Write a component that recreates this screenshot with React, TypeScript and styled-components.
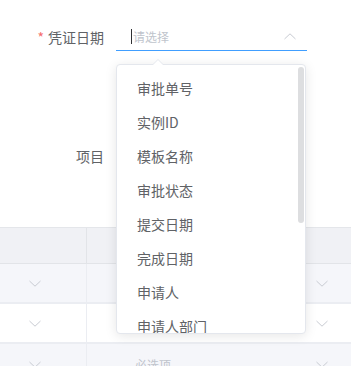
import React from "react";
import styled, { createGlobalStyle } from "styled-components";

const Global = createGlobalStyle`
  html, body { margin: 0; padding: 0; background: #fff; }
  body { font-family: "Noto Sans CJK SC", "Noto Sans", sans-serif; width: 351px; height: 366px; overflow: hidden; }
  * { box-sizing: border-box; }
`;

const Page = styled.div`
  position: relative;
  width: 351px;
  height: 366px;
  overflow: hidden;
  padding-top: 23px;
`;

const FormItem = styled.div<{ $mt?: number }>`
  display: flex;
  align-items: center;
  height: 28px;
  margin-top: ${(p) => p.$mt ?? 0}px;
`;

const Label = styled.div`
  width: 116px;
  padding-right: 12px;
  text-align: right;
  font-size: 14px;
  color: #606266;
  line-height: 28px;
`;

const Star = styled.span`
  color: #f56c6c;
  margin-right: 4px;
`;

const Control = styled.div<{ $active?: boolean }>`
  width: 191px;
  height: 28px;
  display: flex;
  align-items: center;
  padding: 0 11px 0 15px;
  border-bottom: 1px solid ${(p) => (p.$active ? "#409eff" : "transparent")};
`;

const Caret = styled.span`
  width: 1px;
  height: 15px;
  background: #303133;
  margin-right: 1px;
`;

const Placeholder = styled.span`
  flex: 1;
  font-size: 12px;
  color: #c0c4cc;
`;

const Chevron = ({ up, color = "#c8cbd2" }: { up?: boolean; color?: string }) => (
  <svg width="12" height="7" viewBox="0 0 12 7" style={{ display: "block" }}>
    <polyline
      points={up ? "0.5,6 6,0.8 11.5,6" : "0.5,1 6,6.2 11.5,1"}
      fill="none"
      stroke={color}
      strokeWidth="1"
    />
  </svg>
);

const Table = styled.div`
  margin-top: 57px;
  border-top: 1px solid #e4e6ea;
`;

const Row = styled.div<{ $bg: string; $h: number; $bw: number; $head?: boolean }>`
  display: grid;
  grid-template-columns: 87px 1fr;
  height: ${(p) => p.$h}px;
  background: ${(p) => p.$bg};
  border-bottom: ${(p) => p.$bw}px solid ${(p) => (p.$head ? "#e2e4e8" : "#ebedf2")};
`;

const Cell = styled.div<{ $divider?: string; $pr?: number; $pl?: number }>`
  display: flex;
  align-items: center;
  justify-content: ${(p) => (p.$pl ? "flex-start" : "flex-end")};
  padding-right: ${(p) => p.$pr ?? 0}px;
  padding-left: ${(p) => p.$pl ?? 0}px;
  border-right: ${(p) => (p.$divider ? `1px solid ${p.$divider}` : "none")};
`;

const CellText = styled.span`
  flex: 1;
  font-size: 12px;
  color: #c0c4cc;
`;

const Dropdown = styled.div`
  position: absolute;
  left: 116px;
  top: 64px;
  width: 190px;
  height: 270px;
  background: #fff;
  border: 1px solid #e4e7ed;
  border-radius: 4px;
  box-shadow: 0 2px 12px 0 rgba(0, 0, 0, 0.1);
`;

const Arrow = styled.div`
  position: absolute;
  top: -6px;
  left: 35px;
  width: 0;
  height: 0;
  border-left: 6px solid transparent;
  border-right: 6px solid transparent;
  border-bottom: 6px solid #e4e7ed;
  &::after {
    content: "";
    position: absolute;
    left: -5px;
    top: 1px;
    border-left: 5px solid transparent;
    border-right: 5px solid transparent;
    border-bottom: 5px solid #fff;
  }
`;

const List = styled.ul`
  list-style: none;
  margin: 0;
  padding: 6px 0;
  height: 100%;
  overflow: hidden;
  border-radius: 4px;
`;

const Item = styled.li`
  height: 34px;
  line-height: 34px;
  padding: 0 20px;
  font-size: 14px;
  color: #606266;
  white-space: nowrap;
`;

const Thumb = styled.div`
  position: absolute;
  right: 1px;
  top: 2px;
  width: 6px;
  height: 156px;
  border-radius: 3px;
  background: #dddee0;
`;

const options = [
  "审批单号",
  "实例ID",
  "模板名称",
  "审批状态",
  "提交日期",
  "完成日期",
  "申请人",
  "申请人部门",
];

export default function App() {
  return (
    <Page>
      <Global />
      <FormItem>
        <Label>
          <Star>*</Star>凭证日期
        </Label>
        <Control $active>
          <Caret />
          <Placeholder>请选择</Placeholder>
          <Chevron up />
        </Control>
      </FormItem>
      <FormItem $mt={91}>
        <Label>项目</Label>
        <Control />
      </FormItem>
      <Table>
        <Row $bg="#f0f1f5" $h={36} $bw={1} $head>
          <Cell $divider="#e2e4e8" />
          <Cell />
        </Row>
        <Row $bg="#f5f6fa" $h={40} $bw={2}>
          <Cell $divider="#ebedf2" $pr={45}>
            <Chevron />
          </Cell>
          <Cell $pr={23}>
            <Chevron />
          </Cell>
        </Row>
        <Row $bg="#ffffff" $h={40} $bw={2}>
          <Cell $divider="#ebedf2" $pr={45}>
            <Chevron />
          </Cell>
          <Cell $pr={23}>
            <Chevron />
          </Cell>
        </Row>
        <Row $bg="#f5f6fa" $h={40} $bw={0}>
          <Cell $divider="#ebedf2" $pr={45}>
            <Chevron />
          </Cell>
          <Cell $pl={48} $pr={23}>
            <CellText>必选项</CellText>
            <Chevron />
          </Cell>
        </Row>
      </Table>
      <Dropdown>
        <Arrow />
        <List>
          {options.map((o) => (
            <Item key={o}>{o}</Item>
          ))}
        </List>
        <Thumb />
      </Dropdown>
    </Page>
  );
}
